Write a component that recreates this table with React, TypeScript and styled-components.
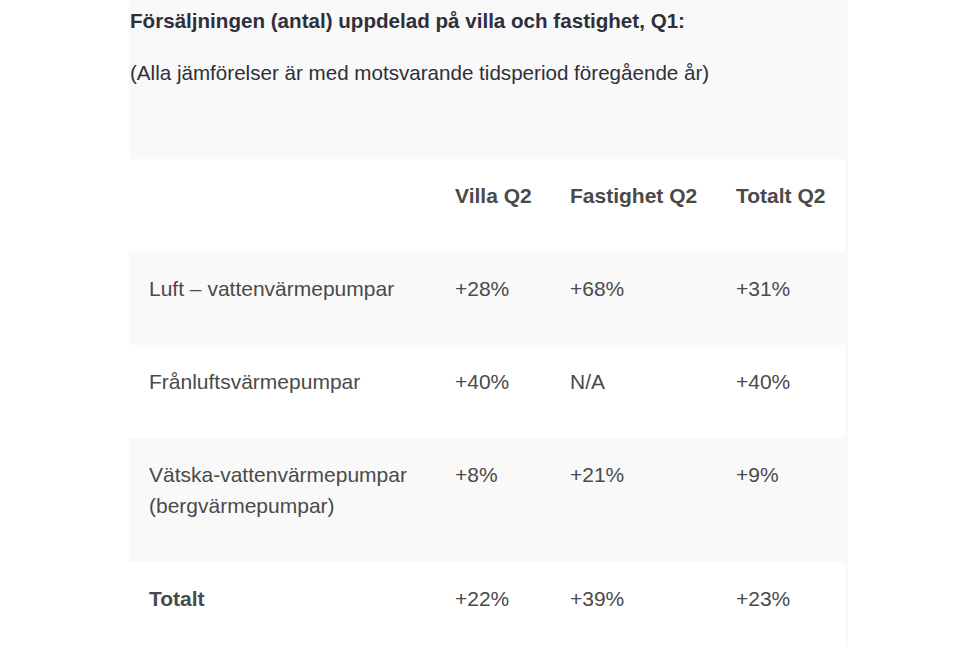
import React from "react";
import styled, { createGlobalStyle } from "styled-components";

const Global = createGlobalStyle`
  html, body { margin: 0; padding: 0; background: #ffffff; }
  body { font-family: "Liberation Sans", Arial, Helvetica, sans-serif; }
`;

const Page = styled.div`
  display: flex;
  height: 647px;
  overflow: hidden;
  background: #ffffff;
`;

const Column = styled.div`
  margin-left: 129px;
  width: 719px;
  background: #f9f9f9;
  padding-top: 5px;
`;

const Title = styled.h2`
  margin: 0 0 0 1px;
  font-size: 20.6px;
  line-height: 31px;
  font-weight: 700;
  color: #2f2f3b;
`;

const Subtitle = styled.p`
  margin: 21px 0 0 1px;
  font-size: 20.6px;
  line-height: 31px;
  color: #2f2f3b;
`;

const Table = styled.table`
  margin-top: 71px;
  width: 716px;
  border-collapse: collapse;
  table-layout: fixed;
`;

const Row = styled.tr<{ $shaded?: boolean }>`
  background: ${(p) => (p.$shaded ? "#f9f9f9" : "#ffffff")};
`;

const Cell = styled.td<{ $bold?: boolean }>`
  padding: 21px 20px 41px 20px;
  font-size: 21px;
  line-height: 31px;
  color: #4a4a4a;
  font-weight: ${(p) => (p.$bold ? 700 : 400)};
  vertical-align: top;
  text-align: left;
`;

const HeadCell = styled.th`
  padding: 21px 20px 41px 20px;
  font-size: 21px;
  line-height: 31px;
  color: #4a4a4a;
  font-weight: 700;
  text-align: left;
  vertical-align: top;
  white-space: nowrap;
  overflow: visible;
`;

const rows: { label: string; vals: string[]; bold?: boolean }[] = [
  { label: "Luft – vattenvärmepumpar", vals: ["+28%", "+68%", "+31%"] },
  { label: "Frånluftsvärmepumpar", vals: ["+40%", "N/A", "+40%"] },
  { label: "Vätska-vattenvärmepumpar (bergvärmepumpar)", vals: ["+8%", "+21%", "+9%"] },
  { label: "Totalt", vals: ["+22%", "+39%", "+23%"], bold: true },
];

export default function App() {
  return (
    <Page>
      <Global />
      <Column>
        <Title>Försäljningen (antal) uppdelad på villa och fastighet, Q1:</Title>
        <Subtitle>(Alla jämförelser är med motsvarande tidsperiod föregående år)</Subtitle>
        <Table>
          <colgroup>
            <col style={{ width: 306 }} />
            <col style={{ width: 115 }} />
            <col style={{ width: 166 }} />
            <col style={{ width: 129 }} />
          </colgroup>
          <thead>
            <Row>
              <HeadCell></HeadCell>
              <HeadCell>Villa Q2</HeadCell>
              <HeadCell>Fastighet Q2</HeadCell>
              <HeadCell>Totalt Q2</HeadCell>
            </Row>
          </thead>
          <tbody>
            {rows.map((r, i) => (
              <Row key={r.label} $shaded={i % 2 === 0}>
                <Cell $bold={r.bold}>{r.label}</Cell>
                {r.vals.map((v, j) => (
                  <Cell key={j}>{v}</Cell>
                ))}
              </Row>
            ))}
          </tbody>
        </Table>
      </Column>
    </Page>
  );
}
